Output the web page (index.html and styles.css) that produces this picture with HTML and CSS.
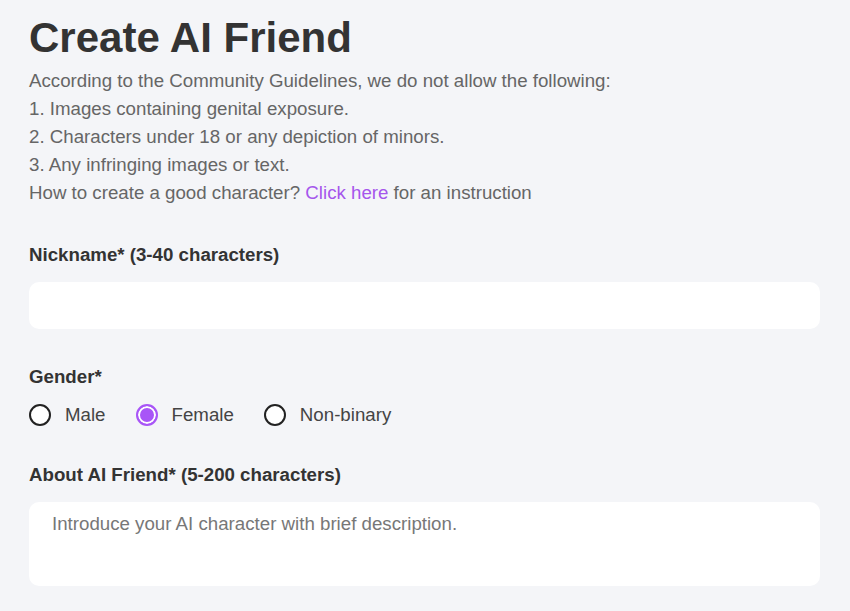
FILE: index.html
```html
<!DOCTYPE html>
<html>
<head>
<meta charset="utf-8">
<link rel="stylesheet" href="styles.css">
</head>
<body>
<main class="page">
  <h1 class="title">Create AI Friend</h1>
  <div class="rules">
    <p>According to the Community Guidelines, we do not allow the following:</p>
    <p>1. Images containing genital exposure.</p>
    <p>2. Characters under 18 or any depiction of minors.</p>
    <p>3. Any infringing images or text.</p>
    <p>How to create a good character? <a class="link" href="#">Click here</a> for an instruction</p>
  </div>

  <section class="field field-nickname">
    <label class="label">Nickname* (3-40 characters)</label>
    <input class="input" type="text">
  </section>

  <section class="field field-gender">
    <div class="label">Gender*</div>
    <div class="radios">
      <label class="radio"><span class="dot"></span>Male</label>
      <label class="radio"><span class="dot dot-on"></span>Female</label>
      <label class="radio"><span class="dot"></span>Non-binary</label>
    </div>
  </section>

  <section class="field field-about">
    <label class="label">About AI Friend* (5-200 characters)</label>
    <textarea class="textarea" placeholder="Introduce your AI character with brief description."></textarea>
  </section>
</main>
</body>
</html>
```

FILE: styles.css
```css
* { box-sizing: border-box; }
html, body { margin: 0; padding: 0; }
body {
  background: #f4f5f8;
  font-family: "Liberation Sans", Arial, sans-serif;
  color: #333;
  overflow: hidden;
}
.page {
  padding: 14px 30px 0 29px;
}
.title {
  margin: 0;
  font-size: 42px;
  font-weight: bold;
  line-height: 48px;
  color: #333;
}
.rules {
  margin-top: 5px;
  color: #666;
  font-size: 18.7px;
  line-height: 28px;
}
.rules p { margin: 0; }
.link { color: #a555ec; text-decoration: none; }
.field { display: flex; flex-direction: column; }
.label {
  font-size: 18.7px;
  font-weight: bold;
  color: #333;
  line-height: 24px;
}
.field-nickname { margin-top: 36px; }
.input {
  margin-top: 15px;
  height: 47px;
  border: none;
  border-radius: 10px;
  background: #fff;
  outline: none;
}
.field-gender { margin-top: 36px; }
.radios {
  display: flex;
  gap: 30px;
  margin-top: 14px;
  font-size: 18.7px;
  color: #444;
  line-height: 24px;
}
.radio { display: flex; align-items: center; gap: 14px; }
.dot {
  width: 22px; height: 22px;
  border: 2px solid #222;
  border-radius: 50%;
  background: #fff;
}
.dot-on {
  border-color: #a855f7;
  background: #a855f7;
  box-shadow: inset 0 0 0 2px #fff;
}
.field-about { margin-top: 36px; }
.textarea {
  margin-top: 15px;
  height: 84px;
  border: none;
  border-radius: 10px;
  background: #fff;
  resize: none;
  padding: 10px 23px;
  font-family: "Liberation Sans", Arial, sans-serif;
  font-size: 18.7px;
  line-height: 24px;
  outline: none;
}
.textarea::placeholder { color: #777; }
```
